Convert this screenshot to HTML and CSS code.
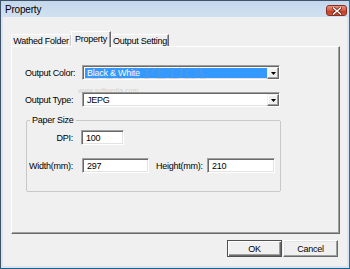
FILE: index.html
```html
<!DOCTYPE html>
<html>
<head>
<meta charset="utf-8">
<link rel="stylesheet" href="styles.css">
</head>
<body>
<div class="window">
  <div class="titlebar">
    <span class="title">Property</span>
    <span class="close">
      <svg width="10" height="8" viewBox="0 0 10 8"><path d="M1.5 1 L8.5 7 M8.5 1 L1.5 7" stroke="#6a2216" stroke-width="3" stroke-linecap="square"/><path d="M1.5 1 L8.5 7 M8.5 1 L1.5 7" stroke="#fff" stroke-width="1.5" stroke-linecap="square"/></svg>
    </span>
  </div>
  <div class="body">
    <div class="tabs">
      <div class="tab t1">Wathed Folder</div>
      <div class="tab active t2">Property</div>
      <div class="tab t3">Output Setting</div>
    </div>
    <div class="panel">
      <div class="field">
        <span class="label">Output Color:</span>
        <div class="combo">
          <span class="value selected">Black &amp; White</span>
          <span class="drop"><svg width="5" height="3" viewBox="0 0 5 3"><path d="M0 0H5L2.5 3Z" fill="#000"/></svg></span>
        </div>
      </div>
      <div class="field">
        <span class="label">Output Type:</span>
        <div class="combo">
          <span class="value">JEPG</span>
          <span class="drop"><svg width="5" height="3" viewBox="0 0 5 3"><path d="M0 0H5L2.5 3Z" fill="#000"/></svg></span>
        </div>
      </div>
      <fieldset class="group">
        <legend>Paper Size</legend>
        <div class="row">
          <span class="rlabel">DPI:</span>
          <span class="input w-dpi">100</span>
        </div>
        <div class="row">
          <span class="rlabel">Width(mm):</span>
          <span class="input w-size">297</span>
          <span class="hlabel">Height(mm):</span>
          <span class="input w-size2">210</span>
        </div>
      </fieldset>
      <div class="watermark">SOFTPEDIA</div>
      <div class="watermark-url">www.softpedia.com</div>
    </div>
    <div class="buttons">
      <span class="btn default">OK</span>
      <span class="btn">Cancel</span>
    </div>
  </div>
</div>
</body>
</html>
```

FILE: styles.css
```css
* { box-sizing: border-box; }
html, body { margin: 0; padding: 0; }
body {
  width: 350px;
  height: 269px;
  font-family: "Liberation Sans", Arial, sans-serif;
  font-size: 9px;
  letter-spacing: -0.25px;
  color: #000;
  overflow: hidden;
}
.window {
  width: 350px;
  height: 269px;
  border: 1px solid #3f5268;
  border-right-color: #2d6f98;
  border-bottom-color: #1d5f8c;
  display: flex;
  flex-direction: column;
  background: #d9e4ef;
}
.titlebar {
  height: 16px;
  flex: none;
  display: flex;
  align-items: center;
  justify-content: space-between;
  padding: 0 2px 0 4px;
  background: linear-gradient(#c3d7ec, #d2e1f0);
}
.title {
  font-size: 10px;
  letter-spacing: -0.2px;
  color: #000;
}
.close {
  width: 21px;
  height: 11px;
  margin-top: 3px;
  border: 1px solid #8a2f20;
  border-radius: 3px;
  background: linear-gradient(#e99380, #d55a42 50%, #c23a22 51%, #d0563c);
  display: flex;
  align-items: center;
  justify-content: center;
}
.close svg { display: block; }
.body {
  flex: 1;
  margin: 0 2px 2px 2px;
  background: #f0f0f0;
  padding: 14px 5px 0 8px;
  display: flex;
  flex-direction: column;
}
.tabs {
  display: flex;
  align-items: flex-end;
  height: 16px;
  margin-bottom: -1px;
  position: relative;
  z-index: 1;
}
.tab {
  height: 12px;
  margin-bottom: 1px;
  background: #f0f0f0;
  border-top: 1px solid #fff;
  border-left: 1px solid #fff;
  border-right: 1px solid #8a8a8a;
  display: flex;
  align-items: center;
  justify-content: center;
  padding-top: 1px;
}
.t1 { width: 60px; border-right-color: #d0d0d0; }
.t2 { width: 40px; }
.t3 { width: 58px; border-right: 1px solid #696969; box-shadow: inset -1px 0 #a0a0a0; }
.tab.active {
  height: 16px;
  margin-bottom: 0;
  border-right: 1px solid #696969;
  box-shadow: inset -1px 0 #a0a0a0;
  align-items: flex-start;
  padding-top: 2px;
}
.panel {
  position: relative;
  width: 329px;
  height: 188px;
  border: 1px solid;
  border-color: #fff #696969 #696969 #fff;
  box-shadow: inset -1px -1px #a0a0a0;
  padding: 18px 0 0 13px;
}
.field {
  display: grid;
  grid-template-columns: 57px 198px;
  align-items: center;
  margin-bottom: 12px;
}
.field:nth-child(2) { margin-bottom: 8px; }
.label { white-space: nowrap; }
.combo {
  height: 15px;
  display: flex;
  background: #fff;
  border: 1px solid;
  border-color: #a0a0a0 #fff #fff #a0a0a0;
  box-shadow: inset 1px 1px #696969, inset -1px -1px #e3e3e3;
  padding: 2px 1px 1px 2px;
}
.value {
  flex: 1;
  display: flex;
  align-items: center;
  padding-left: 2px;
}
.value.selected {
  background: #3399ff;
  color: #fff;
}
.drop {
  width: 12px;
  border: 1px solid;
  border-color: #f0f0f0 #696969 #696969 #f0f0f0;
  box-shadow: inset -1px -1px #a0a0a0, inset 1px 1px #fff;
  background: #f0f0f0;
  display: flex;
  align-items: center;
  justify-content: center;
  margin: -1px -1px -1px 0;
}
.drop svg { display: block; }
.group {
  margin: 0 0 0 1px;
  width: 255px;
  height: 77px;
  border: 1px solid #c8c8c8;
  border-radius: 2px;
  padding: 4px 0 0 0;
}
.group legend {
  margin-left: 3px;
  padding: 0 2px;
  line-height: 11px;
}
.row {
  display: flex;
  align-items: center;
  height: 15px;
  margin-bottom: 13px;
}
.rlabel {
  width: 46px;
  text-align: right;
  margin-right: 8px;
  white-space: nowrap;
}
.hlabel {
  width: 51px;
  margin-left: 7px;
  white-space: nowrap;
}
.input {
  height: 15px;
  background: #fff;
  border: 1px solid;
  border-color: #a0a0a0 #fff #fff #a0a0a0;
  box-shadow: inset 1px 1px #696969, inset -1px -1px #e3e3e3;
  padding: 0 0 0 4px;
  display: flex;
  align-items: center;
}
.w-dpi { width: 43px; }
.w-size { width: 67px; margin-left: 1px; }
.w-size2 { width: 68px; }
.watermark {
  position: absolute;
  left: 78px;
  top: 14px;
  font-family: "Liberation Serif", serif;
  font-size: 20px;
  letter-spacing: 1px;
  color: rgba(150,150,150,0.22);
  pointer-events: none;
}
.watermark-url {
  position: absolute;
  left: 66px;
  top: 40px;
  font-size: 7px;
  letter-spacing: 0;
  color: rgba(120,120,120,0.3);
  pointer-events: none;
}
.buttons {
  display: flex;
  justify-content: flex-end;
  gap: 1px;
  margin-top: 6px;
  padding-right: 4px;
}
.btn {
  width: 55px;
  height: 17px;
  display: flex;
  align-items: center;
  justify-content: center;
  background: #f0f0f0;
  border: 1px solid;
  border-color: #fff #696969 #696969 #fff;
  box-shadow: inset -1px -1px #a0a0a0, inset 1px 1px #e3e3e3;
}
.btn.default {
  border: 1px solid #505050;
  box-shadow: inset 1px 1px #fff, inset -1px -1px #696969, inset -2px -2px #a0a0a0;
}
```
